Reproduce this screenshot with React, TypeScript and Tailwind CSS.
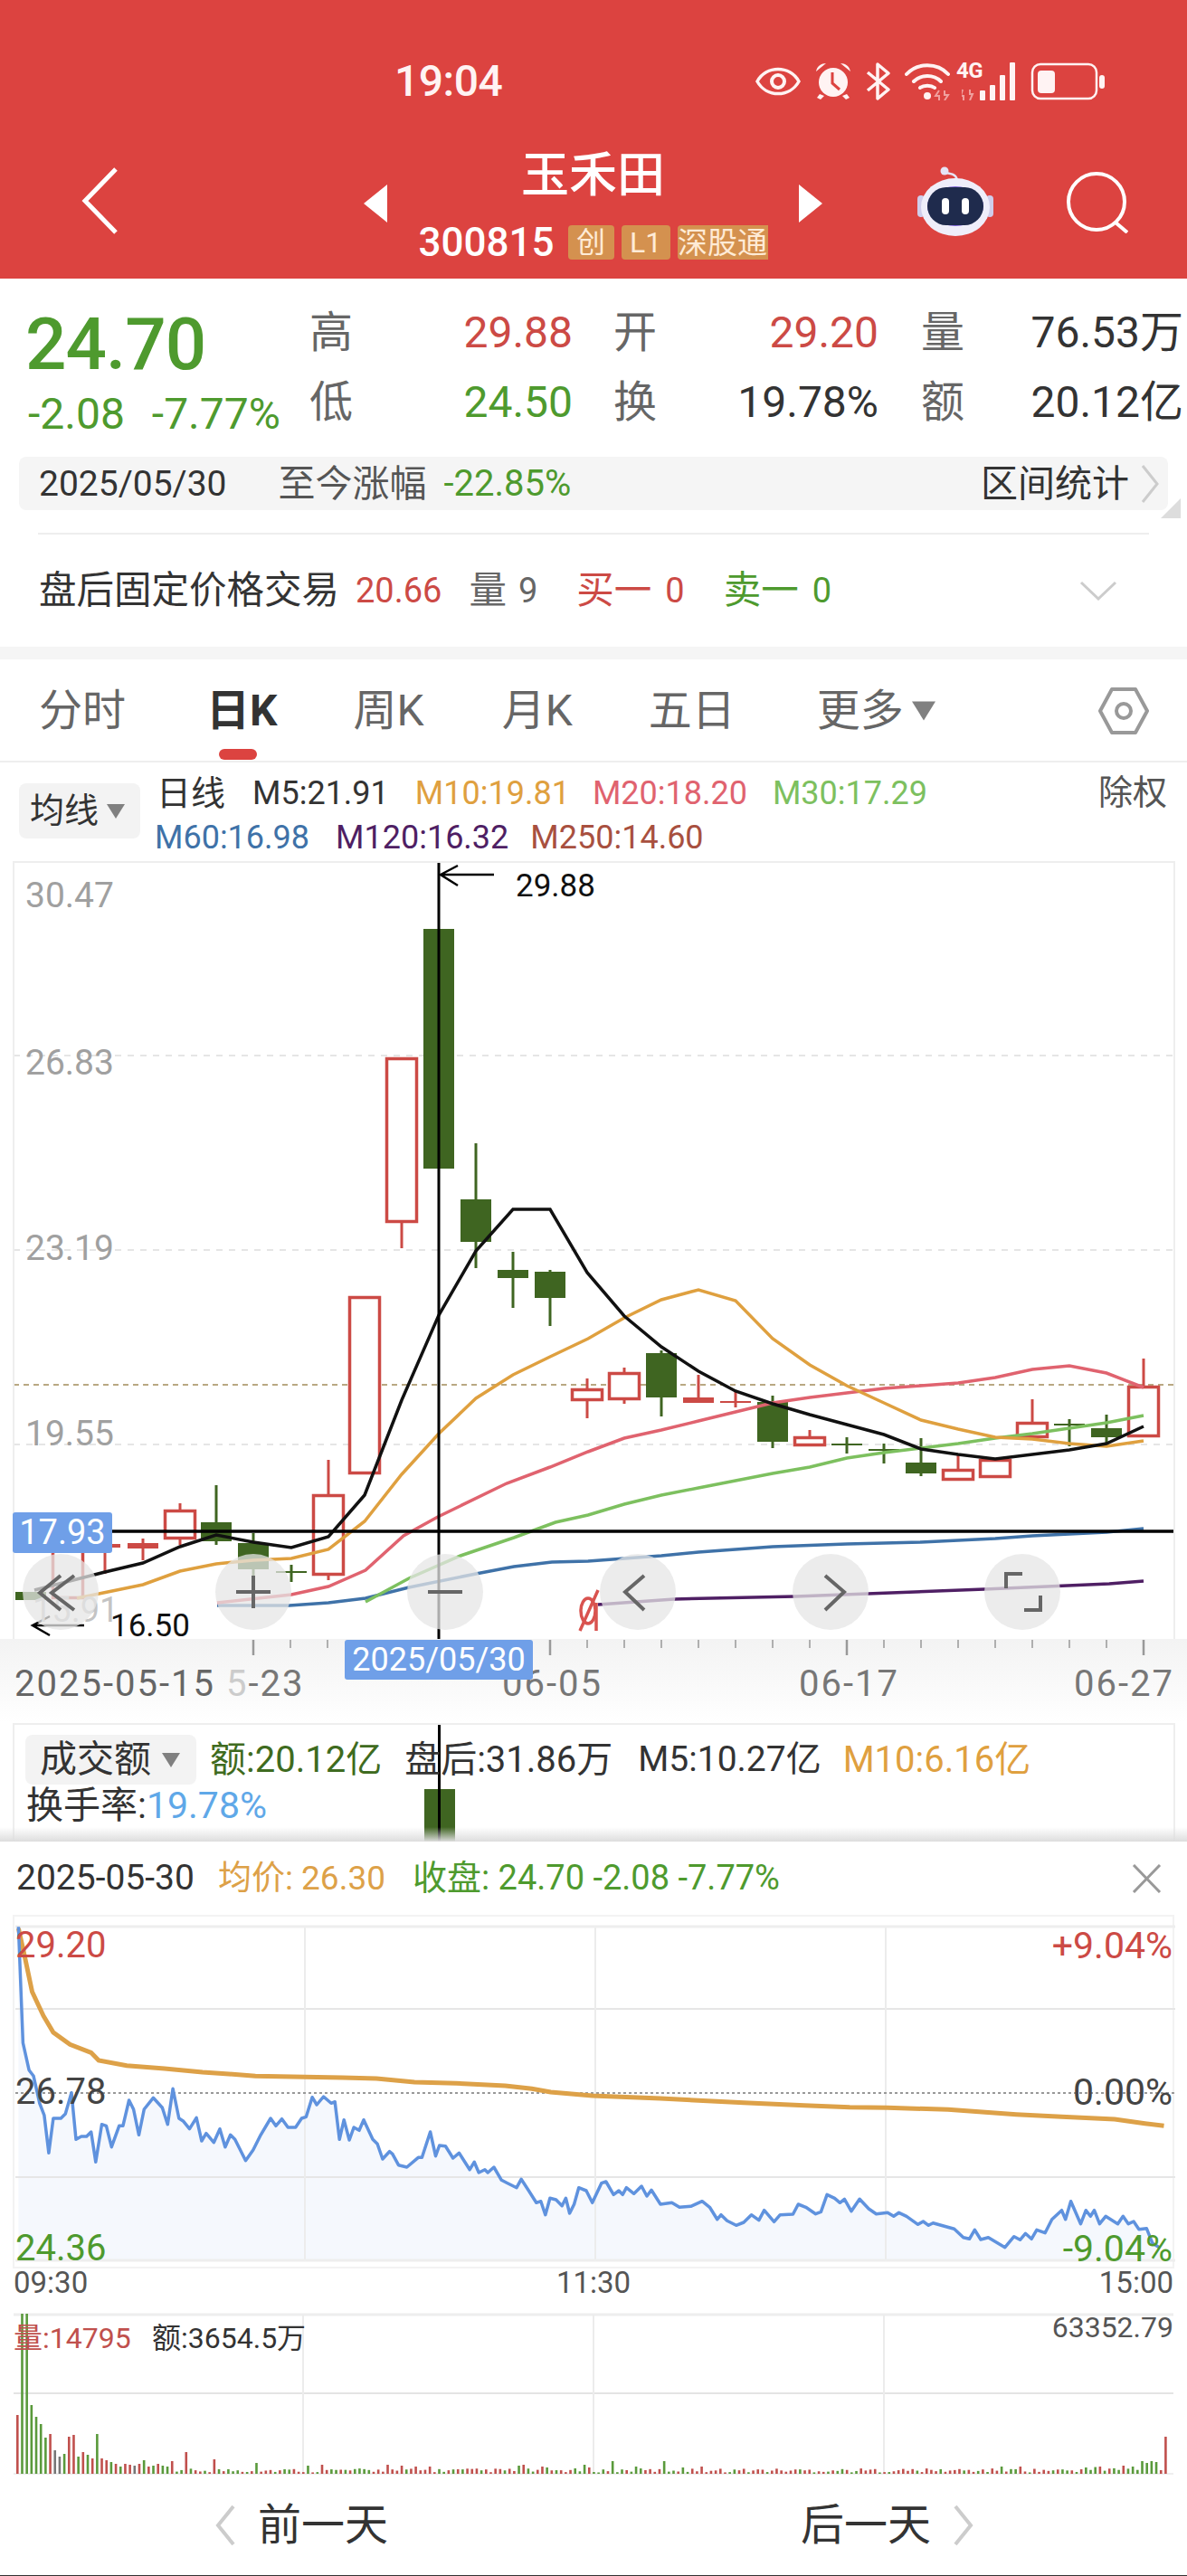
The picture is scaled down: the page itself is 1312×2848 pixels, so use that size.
import type { ReactNode } from 'react';

const RED = '#CC4A45';
const DGREEN = '#3F6521';

type Candle = { x: number; t: number; b: number; wt: number; wb: number; c: 'r' | 'g'; solid?: boolean };

const candles: Candle[] = [
  { x: 34, t: 1760, b: 1769, wt: 1760, wb: 1769, c: 'g', solid: true },
  { x: 75, t: 1702, b: 1768, wt: 1695, wb: 1768, c: 'r' },
  { x: 116, t: 1707, b: 1711, wt: 1702, wb: 1740, c: 'r', solid: true },
  { x: 158, t: 1706, b: 1712, wt: 1701, wb: 1725, c: 'r', solid: true },
  { x: 199, t: 1669, b: 1702, wt: 1662, wb: 1708, c: 'r' },
  { x: 239, t: 1683, b: 1704, wt: 1642, wb: 1708, c: 'g', solid: true },
  { x: 280, t: 1706, b: 1735, wt: 1695, wb: 1745, c: 'g', solid: true },
  { x: 322, t: 1737, b: 1739, wt: 1730, wb: 1749, c: 'g', solid: true },
  { x: 363, t: 1652, b: 1742, wt: 1614, wb: 1747, c: 'r' },
  { x: 403, t: 1433, b: 1630, wt: 1433, wb: 1630, c: 'r' },
  { x: 444, t: 1169, b: 1352, wt: 1169, wb: 1380, c: 'r' },
  { x: 485, t: 1027, b: 1292, wt: 1027, wb: 1292, c: 'g', solid: true },
  { x: 526, t: 1326, b: 1373, wt: 1264, wb: 1402, c: 'g', solid: true },
  { x: 567, t: 1404, b: 1413, wt: 1384, wb: 1446, c: 'g', solid: true },
  { x: 608, t: 1406, b: 1435, wt: 1404, wb: 1466, c: 'g', solid: true },
  { x: 649, t: 1535, b: 1549, wt: 1524, wb: 1568, c: 'r' },
  { x: 690, t: 1517, b: 1548, wt: 1512, wb: 1552, c: 'r' },
  { x: 731, t: 1496, b: 1545, wt: 1493, wb: 1566, c: 'g', solid: true },
  { x: 772, t: 1545, b: 1551, wt: 1520, wb: 1551, c: 'r', solid: true },
  { x: 813, t: 1549, b: 1551, wt: 1537, wb: 1556, c: 'r', solid: true },
  { x: 854, t: 1550, b: 1594, wt: 1543, wb: 1601, c: 'g', solid: true },
  { x: 895, t: 1588, b: 1599, wt: 1581, wb: 1599, c: 'r' },
  { x: 936, t: 1596, b: 1598, wt: 1589, wb: 1607, c: 'g', solid: true },
  { x: 977, t: 1602, b: 1604, wt: 1596, wb: 1618, c: 'g', solid: true },
  { x: 1018, t: 1617, b: 1629, wt: 1590, wb: 1632, c: 'g', solid: true },
  { x: 1059, t: 1624, b: 1637, wt: 1609, wb: 1637, c: 'r' },
  { x: 1100, t: 1613, b: 1634, wt: 1613, wb: 1634, c: 'r' },
  { x: 1141, t: 1572, b: 1590, wt: 1547, wb: 1590, c: 'r' },
  { x: 1182, t: 1574, b: 1576, wt: 1569, wb: 1599, c: 'g', solid: true },
  { x: 1223, t: 1579, b: 1589, wt: 1564, wb: 1596, c: 'g', solid: true },
  { x: 1264, t: 1532, b: 1589, wt: 1502, wb: 1589, c: 'r' },
];

const m5 = [[38, 1758], [116, 1738], [158, 1728], [199, 1710], [239, 1697], [280, 1705], [322, 1711], [363, 1699], [403, 1653], [444, 1548], [485, 1454], [526, 1383], [567, 1337], [608, 1337], [649, 1407], [690, 1455], [731, 1489], [772, 1516], [813, 1538], [854, 1552], [895, 1564], [936, 1575], [977, 1586], [1018, 1602], [1059, 1608], [1100, 1613], [1141, 1608], [1182, 1603], [1223, 1596], [1264, 1577]];
const m10 = [[85, 1767], [158, 1752], [199, 1737], [239, 1729], [280, 1725], [322, 1723], [363, 1713], [403, 1682], [444, 1630], [485, 1585], [526, 1546], [567, 1520], [608, 1500], [650, 1480], [690, 1457], [731, 1437], [772, 1426], [813, 1438], [854, 1480], [895, 1509], [936, 1532], [977, 1551], [1018, 1570], [1059, 1580], [1100, 1589], [1141, 1591], [1182, 1596], [1223, 1599], [1264, 1593]];
const m20 = [[240, 1772], [322, 1763], [363, 1754], [404, 1736], [446, 1698], [484, 1677], [560, 1640], [608, 1622], [650, 1605], [690, 1590], [731, 1581], [772, 1571], [813, 1561], [854, 1551], [895, 1545], [936, 1540], [977, 1535], [1018, 1532], [1059, 1529], [1100, 1523], [1141, 1514], [1182, 1510], [1223, 1518], [1264, 1534]];
const m30 = [[404, 1771], [452, 1745], [509, 1720], [568, 1700], [614, 1683], [650, 1675], [690, 1663], [731, 1653], [772, 1645], [813, 1637], [854, 1629], [895, 1622], [936, 1612], [977, 1606], [1018, 1601], [1059, 1596], [1100, 1590], [1141, 1585], [1182, 1579], [1223, 1573], [1264, 1565]];
const m60 = [[240, 1775], [320, 1775], [363, 1772], [404, 1767], [452, 1755], [526, 1740], [568, 1732], [610, 1727], [650, 1726], [731, 1720], [772, 1716], [813, 1713], [854, 1710], [936, 1707], [1018, 1705], [1100, 1701], [1141, 1698], [1182, 1696], [1223, 1694], [1264, 1690]];
const m120 = [[661, 1774], [745, 1768], [879, 1765], [1088, 1757], [1226, 1751], [1264, 1748]];

// traced from the zoomed crop: x / 1.195, y / 3 + 2030
const blueRaw = [[22, 295], [28, 680], [36, 770], [42, 790], [50, 880], [56, 920], [62, 1045], [68, 930], [78, 930], [84, 915], [92, 845], [98, 1000], [105, 990], [112, 990], [118, 975], [124, 1075], [132, 950], [138, 955], [145, 1025], [155, 955], [160, 955], [168, 870], [174, 900], [181, 985], [188, 900], [200, 862], [212, 895], [219, 950], [226, 832], [234, 930], [240, 940], [248, 965], [257, 928], [264, 1005], [270, 980], [280, 1010], [288, 965], [295, 1025], [302, 985], [308, 1000], [322, 1070], [332, 1035], [342, 985], [355, 930], [362, 955], [370, 932], [378, 960], [388, 960], [396, 930], [402, 925], [410, 860], [416, 885], [425, 858], [435, 880], [440, 875], [446, 1000], [452, 935], [459, 1002], [465, 960], [472, 970], [478, 935], [490, 1000], [496, 1015], [503, 1065], [512, 1040], [516, 1048], [524, 1085], [535, 1092], [550, 1060], [555, 1060], [566, 975], [573, 1055], [578, 1020], [586, 1022], [596, 1062], [604, 1045], [618, 1100], [624, 1075], [630, 1110], [638, 1100], [642, 1110], [650, 1092], [660, 1135], [668, 1145], [680, 1160], [686, 1132], [696, 1170], [706, 1210], [712, 1205], [718, 1250], [724, 1195], [732, 1200], [740, 1220], [745, 1195], [750, 1245], [756, 1215], [762, 1160], [772, 1170], [780, 1210], [792, 1145], [798, 1140], [808, 1183], [815, 1170], [820, 1183], [825, 1160], [835, 1180], [845, 1155], [852, 1188], [858, 1168], [870, 1215], [885, 1210], [895, 1225], [910, 1222], [925, 1205], [935, 1225], [945, 1265], [950, 1250], [958, 1270], [970, 1285], [980, 1275], [990, 1250], [1000, 1268], [1007, 1235], [1020, 1273], [1028, 1250], [1045, 1248], [1052, 1215], [1062, 1225], [1075, 1247], [1082, 1240], [1090, 1183], [1100, 1195], [1107, 1210], [1113, 1198], [1122, 1238], [1133, 1198], [1145, 1230], [1155, 1247], [1170, 1243], [1178, 1255], [1185, 1243], [1195, 1255], [1210, 1282], [1217, 1272], [1224, 1285], [1230, 1277], [1245, 1288], [1258, 1297], [1270, 1325], [1278, 1330], [1285, 1300], [1293, 1332], [1303, 1325], [1325, 1358], [1337, 1322], [1345, 1333], [1352, 1312], [1360, 1330], [1367, 1300], [1378, 1310], [1387, 1265], [1400, 1235], [1405, 1265], [1412, 1205], [1425, 1280], [1432, 1235], [1438, 1255], [1443, 1235], [1450, 1280], [1458, 1255], [1474, 1280], [1481, 1255], [1488, 1280], [1495, 1272], [1502, 1298], [1512, 1295], [1520, 1345], [1530, 1360]];
const orangeRaw = [[22, 300], [30, 390], [40, 510], [55, 590], [68, 645], [90, 685], [118, 712], [128, 738], [165, 755], [215, 765], [265, 777], [300, 783], [335, 790], [400, 793], [450, 795], [495, 798], [545, 810], [600, 814], [665, 822], [700, 832], [725, 843], [780, 855], [870, 864], [980, 878], [1060, 887], [1120, 893], [1170, 895], [1250, 901], [1340, 917], [1400, 925], [1470, 933], [1510, 947], [1535, 955]];

const fromCrop = (a: number[][]) => a.map(([u, v]) => [u / 1.195, 2030 + v / 3]);
const toPts = (a: number[][]) => a.map((p) => p.map((n) => n.toFixed(1)).join(',')).join(' ');

const blue = fromCrop(blueRaw);
const orange = fromCrop(orangeRaw);

// volume bars, first ones read off the crop, the rest noise with known bumps
const firstBars: [number, string][] = [[65, 'r'], [177, 'g'], [177, 'g'], [76, 'g'], [63, 'g'], [55, 'g'], [40, 'g'], [44, 'r'], [26, 'x'], [19, 'x'], [22, 'g'], [41, 'r'], [43, 'r'], [19, 'g'], [24, 'r'], [21, 'g'], [17, 'r'], [44, 'g'], [17, 'r'], [15, 'r'], [13, 'g'], [11, 'r'], [8, 'g'], [11, 'r'], [10, 'r'], [9, 'x'], [11, 'r'], [15, 'g'], [8, 'r'], [9, 'g'], [11, 'r'], [9, 'g'], [8, 'g'], [14, 'r']];
const bumps: Record<number, number> = { 36: 24, 42: 16, 51: 12, 62: 9, 65: 10, 79: 10, 82: 9, 85: 8, 88: 8, 107: 9, 108: 10, 112: 8, 113: 7, 121: 10, 122: 7, 127: 14, 132: 8, 138: 14, 142: 7, 146: 8, 210: 8, 214: 8, 228: 7, 231: 8, 236: 9, 238: 8, 240: 14, 241: 12, 242: 14, 243: 13, 244: 4, 245: 41 };
const bars = Array.from({ length: 246 }, (_, i) => {
  const x = 18 + i * 5.18;
  if (i < firstBars.length) return { x, h: firstBars[i][0], c: firstBars[i][1] };
  const noise = Math.abs(Math.sin(i * 12.9898) * 43758.5453) % 1;
  const h = bumps[i] ?? 1.5 + noise * (i > 225 ? 7 : 4.5);
  return { x, h, c: (i * 7 + Math.floor(noise * 10)) % 2 ? 'r' : 'g' };
});
const barColor: Record<string, string> = { r: '#C0504D', g: '#5A9A3C', x: '#777777' };

function CircleBtn({ children, className }: { children: ReactNode; className: string }) {
  return (
    <div className={`absolute top-[766px] size-[84px] rounded-full bg-[#e6e6e6]/75 ${className}`}>
      <svg viewBox="0 0 84 84" className="size-[84px]" fill="none" stroke="#666666" strokeWidth="4">
        {children}
      </svg>
    </div>
  );
}

function KChart() {
  return (
    <svg viewBox="15 952 1282 860" className="absolute inset-0 w-[1282px] h-[860px]" fill="none">
      {[1167, 1382, 1597].map((y) => (
        <line key={y} x1="15" x2="1297" y1={y} y2={y} stroke="#dddddd" strokeWidth="1.5" strokeDasharray="7 7" />
      ))}
      <line x1="15" x2="1297" y1="1531" y2="1531" stroke="#B9A882" strokeWidth="2" strokeDasharray="6 5" />
      {candles.map((k) => {
        const col = k.c === 'r' ? RED : DGREEN;
        return (
          <g key={k.x}>
            {k.wt < k.t && <line x1={k.x} x2={k.x} y1={k.wt} y2={k.t} stroke={col} strokeWidth="3" />}
            {k.wb > k.b && <line x1={k.x} x2={k.x} y1={k.b} y2={k.wb} stroke={col} strokeWidth="3" />}
            {k.solid ? (
              <rect x={k.x - 17} y={k.t} width="34" height={k.b - k.t} fill={col} />
            ) : (
              <rect x={k.x - 16.5} y={k.t + 1.5} width="33" height={k.b - k.t - 3} fill="#ffffff" stroke={col} strokeWidth="3.5" />
            )}
          </g>
        );
      })}
      <polyline points={toPts(m120)} stroke="#4F1F64" strokeWidth="3.5" />
      <polyline points={toPts(m60)} stroke="#3F72A8" strokeWidth="3.5" />
      <polyline points={toPts(m30)} stroke="#7DC05F" strokeWidth="3.5" />
      <polyline points={toPts(m20)} stroke="#E0636F" strokeWidth="3.5" />
      <polyline points={toPts(m10)} stroke="#DFA03F" strokeWidth="3.5" />
      <polyline points={toPts(m5)} stroke="#111111" strokeWidth="3.5" />
      <ellipse cx="650" cy="1781" rx="8" ry="14" stroke="#D9534F" strokeWidth="3.5" />
      <path d="M661 1758 L641 1803 M659 1772 L659 1803" stroke="#D9534F" strokeWidth="3.5" />
      <line x1="485" x2="485" y1="952" y2="1812" stroke="#000000" strokeWidth="3" />
      <line x1="124" x2="1297" y1="1693" y2="1693" stroke="#000000" strokeWidth="3.5" />
      <path d="M546 967 H487 M506 957 L487 967 L506 979" stroke="#000000" strokeWidth="2.5" />
      <path d="M93 1797 H36 M55 1787 L36 1797 L55 1808" stroke="#000000" strokeWidth="2.5" />
    </svg>
  );
}

function AxisTicks() {
  const xs = Array.from({ length: 25 }, (_, i) => 280 + i * 41);
  const major = [280, 608, 936, 1264];
  return (
    <svg viewBox="0 1812 1312 20" className="absolute left-0 top-0 w-[1312px] h-[20px]">
      {xs.map((x) => (
        <line key={x} x1={x} x2={x} y1="1813" y2={major.includes(x) ? 1830 : 1822} stroke="#999999" strokeWidth={major.includes(x) ? 2.5 : 1.5} />
      ))}
    </svg>
  );
}

function IntradayChart() {
  const area = `${toPts(blue)} ${blue[blue.length - 1][0]},2497 ${blue[0][0]},2497`;
  return (
    <svg viewBox="14 2117 1284 391" className="absolute inset-0 w-[1284px] h-[391px]" fill="none">
      <polygon points={area} fill="#F5F8FD" />
      {[2219, 2405].map((y) => (
        <line key={y} x1="15" x2="1297" y1={y} y2={y} stroke="#e6e6e6" strokeWidth="2" />
      ))}
      {[335, 656, 977].map((x) => (
        <line key={x} x1={x} x2={x} y1="2128" y2="2497" stroke="#ececec" strokeWidth="2" />
      ))}
      <line x1="15" x2="1297" y1="2128" y2="2128" stroke="#eeeeee" strokeWidth="3" />
      <line x1="15" x2="1297" y1="2497" y2="2497" stroke="#eeeeee" strokeWidth="3" />
      <line x1="15" x2="1297" y1="2312" y2="2312" stroke="#999999" strokeWidth="2" strokeDasharray="3 3" />
      <polyline points={toPts(orange)} stroke="#DDA148" strokeWidth="5" />
      <polyline points={toPts(blue)} stroke="#5F92DE" strokeWidth="3.5" strokeLinejoin="round" />
    </svg>
  );
}

function VolumeChart() {
  return (
    <svg viewBox="14 2555 1284 180" className="absolute inset-0 w-[1284px] h-[180px]" fill="none">
      <line x1="15" x2="1297" y1="2557" y2="2557" stroke="#eeeeee" strokeWidth="3" />
      <line x1="15" x2="1297" y1="2644" y2="2644" stroke="#e4e4e4" strokeWidth="2" />
      <line x1="15" x2="1297" y1="2733" y2="2733" stroke="#eeeeee" strokeWidth="2" />
      {[335, 656, 977].map((x) => (
        <line key={x} x1={x} x2={x} y1="2557" y2="2733" stroke="#ececec" strokeWidth="2" />
      ))}
      {bars.map((b) => (
        <rect key={b.x} x={b.x} y={2733 - b.h} width="2.6" height={b.h} fill={barColor[b.c]} />
      ))}
    </svg>
  );
}

function StatusIcons() {
  return (
    <div className="flex items-center text-white">
      <svg viewBox="0 0 50 34" className="w-[50px] h-[34px]" fill="none" stroke="#FFF3F3" strokeWidth="3.5">
        <path d="M2 17 C12 -1 38 -1 48 17 C38 35 12 35 2 17 Z" />
        <circle cx="25" cy="17" r="7" strokeWidth="4" />
      </svg>
      <svg viewBox="0 0 42 42" className="ml-[15px] w-[42px] h-[42px]" fill="#FFF3F3">
        <circle cx="21" cy="22" r="16" />
        <path d="M2 10 C3 4 8 1 13 1 Z M40 10 C39 4 34 1 29 1 Z M6 35 L11 37 L7 41 L3 39 Z M36 35 L31 37 L35 41 L39 39 Z" />
        <path d="M20 11 V23 L28 30" fill="none" stroke="#DC4340" strokeWidth="3" />
      </svg>
      <svg viewBox="0 0 28 42" className="ml-[15px] w-[28px] h-[42px]" fill="none" stroke="#FFF3F3" strokeWidth="3.5" strokeLinejoin="round">
        <path d="M2 11 L25 30 L13 40 V2 L25 12 L2 31" />
      </svg>
      <div className="relative ml-[15px] w-[52px] h-[42px]">
        <svg viewBox="0 0 52 42" className="w-[52px] h-[42px]" fill="none" stroke="#FFF3F3" strokeWidth="4" strokeLinecap="round">
          <path d="M2 13 C14 0 36 0 48 13" />
          <path d="M10 21 C18 13 32 13 40 21" />
          <path d="M17 28 C21 25 29 25 33 28" />
          <circle cx="25" cy="37" r="4" fill="#FFF3F3" stroke="none" />
          <path d="M38 31 L34 37 H38 V42 M44 42 L48 36 H44 V31" stroke="#F0A09E" strokeWidth="2" strokeLinecap="butt" />
        </svg>
      </div>
      <div className="relative ml-[11px] w-[68px] h-[42px]">
        <span className="absolute -left-[6px] -top-[4px] text-[24px] leading-[26px] font-bold text-[#FFF3F3] tracking-[-0.5px]">4G</span>
        <svg viewBox="0 0 68 42" className="w-[68px] h-[42px]" fill="#FFF3F3">
          <path d="M1 30 L-1 37 H2 V42 M9 42 L12 35 H9 V30" fill="none" stroke="#F0A09E" strokeWidth="2" />
          <rect x="20" y="31" width="6" height="11" rx="1" />
          <rect x="31" y="25" width="6" height="17" rx="1" />
          <rect x="42" y="14" width="6" height="28" rx="1" />
          <rect x="53" y="0" width="6" height="42" rx="1" />
        </svg>
      </div>
      <svg viewBox="0 0 84 42" className="ml-[8px] w-[84px] h-[42px]" fill="#FFF3F3">
        <rect x="2" y="2" width="71" height="38" rx="9" fill="none" stroke="#FFF3F3" strokeWidth="2.5" />
        <rect x="8" y="9" width="19" height="25" rx="4" />
        <rect x="76" y="14" width="6" height="15" rx="3" />
      </svg>
    </div>
  );
}

function Robot() {
  return (
    <svg viewBox="0 0 84 78" className="w-[84px] h-[78px]">
      <path d="M44 18 C44 10 38 9 31 8" fill="none" stroke="#E6E4F6" strokeWidth="2.5" />
      <circle cx="30" cy="6" r="4.5" fill="#E6E4F6" />
      <rect x="0" y="33" width="8" height="24" rx="4" fill="#CFCDEB" />
      <rect x="76" y="33" width="8" height="24" rx="4" fill="#CFCDEB" />
      <ellipse cx="42" cy="46" rx="38" ry="32" fill="#EFEEFA" />
      <ellipse cx="42" cy="45" rx="31" ry="22" fill="#7F62D8" />
      <rect x="11" y="24" width="62" height="42" rx="21" fill="#1F2B4D" />
      <rect x="27" y="36" width="8" height="18" rx="4" fill="#FFFFFF" />
      <rect x="49" y="36" width="8" height="18" rx="4" fill="#FFFFFF" />
    </svg>
  );
}

function TabIcon() {
  return (
    <svg viewBox="0 0 56 52" className="w-[56px] h-[52px]" fill="none" stroke="#999999" strokeWidth="4" strokeLinejoin="round">
      <path d="M15 2 H41 L54 26 L41 50 H15 L2 26 Z" />
      <circle cx="28" cy="26" r="8" />
    </svg>
  );
}

function Caret({ className }: { className: string }) {
  return (
    <svg viewBox="0 0 20 16" className={className} fill="#808080">
      <path d="M0 0 H20 L10 16 Z" />
    </svg>
  );
}

export default function App() {
  return (
    <div className="relative w-[1312px] h-[2848px] overflow-hidden bg-white font-[Roboto,'Noto_Sans_CJK_SC',sans-serif] text-[#333333]">
      <header className="h-[308px] pt-[66px] bg-[#DC4340] text-white">
        <div className="flex items-center justify-between h-[48px] pl-[436px] pr-[89px]">
          <span className="text-[48px] leading-[48px] font-medium text-[#FFF3F3] tracking-[-0.5px]">19:04</span>
          <StatusIcons />
        </div>
        <div className="flex items-start pl-[90px] pt-[54px]">
          <svg viewBox="0 0 41 74" className="mt-[17px] w-[41px] h-[74px]" fill="none" stroke="#ffffff" strokeWidth="5">
            <path d="M38 2 L4 37 L38 72" />
          </svg>
          <svg viewBox="0 0 26 42" className="mt-[36px] ml-[271px] w-[26px] h-[42px]" fill="#ffffff">
            <path d="M26 0 V42 L0 21 Z" />
          </svg>
          <div className="flex flex-col items-center w-[455px] -mt-[5px]">
            <div className="text-[53px] leading-[62px] font-medium">玉禾田</div>
            <div className="flex items-center mt-[23px] h-[40px]">
              <span className="text-[44px] leading-[40px] font-medium mr-[15px]">300815</span>
              <span className="flex items-center justify-center w-[51px] h-[38px] rounded-[4px] bg-[#D4914F] text-[#FFEBD6] text-[32px] leading-none">创</span>
              <span className="flex items-center justify-center ml-[8px] w-[54px] h-[38px] rounded-[4px] bg-[#D4914F] text-[#FFEBD6] text-[32px] leading-none">L1</span>
              <span className="flex items-center justify-center ml-[8px] w-[100px] h-[38px] rounded-l-[4px] bg-[#D4914F] text-[#FFEBD6] text-[33px] leading-none whitespace-nowrap">深股通</span>
            </div>
          </div>
          <svg viewBox="0 0 26 42" className="mt-[36px] w-[26px] h-[42px]" fill="#ffffff">
            <path d="M0 0 V42 L26 21 Z" />
          </svg>
          <div className="mt-[15px] ml-[105px]">
            <Robot />
          </div>
          <svg viewBox="0 0 68 68" className="mt-[22px] ml-[81px] w-[68px] h-[68px]" fill="none" stroke="#ffffff" strokeWidth="4">
            <circle cx="33" cy="33" r="31" />
            <path d="M54 56 L67 67" />
          </svg>
        </div>
      </header>

      <section className="flex flex-col h-[407px]">
        <div className="flex items-start">
          <div className="w-[342px] pl-[28px] pt-[31px] shrink-0">
            <div className="text-[#4E9A2E] text-[80px] leading-[84px] font-medium tracking-[-1px]">24.70</div>
            <div className="flex mt-[11px] pl-[3px] text-[#4E9A2E] text-[48px] leading-[48px] whitespace-nowrap">
              <span>-2.08</span>
              <span className="ml-[30px]">-7.77%</span>
            </div>
          </div>
          <div className="grid grid-cols-[48px_243px_48px_290px_48px_289px] grid-rows-[77px_77px] items-center pt-[21px] whitespace-nowrap text-[48px] leading-[60px] w-[966px]">
            <span className="text-[#666666]">高</span>
            <span className="text-right text-[#CC4A45]">29.88</span>
            <span className="ml-[45px] text-[#666666]">开</span>
            <span className="text-right text-[#CC4A45]">29.20</span>
            <span className="ml-[47px] text-[#666666]">量</span>
            <span className="text-right text-[#333333]">76.53万</span>
            <span className="text-[#666666]">低</span>
            <span className="text-right text-[#4E9A2E]">24.50</span>
            <span className="ml-[45px] text-[#666666]">换</span>
            <span className="text-right text-[#333333]">19.78%</span>
            <span className="ml-[47px] text-[#666666]">额</span>
            <span className="text-right text-[#333333]">20.12亿</span>
          </div>
        </div>
        <div className="relative flex items-center mt-[22px] ml-[21px] w-[1270px] h-[59px] rounded-[8px] bg-[#f5f5f5] text-[39px] leading-[48px]">
          <span className="ml-[22px]">2025/05/30</span>
          <span className="ml-[57px] text-[#555555] text-[41px]">至今涨幅</span>
          <span className="ml-[19px] text-[#4E9A2E] text-[40px]">-22.85%</span>
          <span className="ml-auto text-[41px]">区间统计</span>
          <svg viewBox="0 0 22 44" className="ml-[12px] mr-[9px] w-[22px] h-[44px]" fill="none" stroke="#cccccc" strokeWidth="3">
            <path d="M3 2 L19 22 L3 42" />
          </svg>
          <svg viewBox="0 0 22 22" className="absolute -right-[14px] -bottom-[9px] w-[22px] h-[22px]" fill="#dddddd">
            <path d="M22 0 V22 H0 Z" />
          </svg>
        </div>
        <div className="mt-[25px] mx-[42px] h-[2px] bg-[#eeeeee]" />
        <div className="flex flex-1 items-center pl-[43px] pr-[77px] text-[41.5px] whitespace-nowrap">
          <span>盘后固定价格交易</span>
          <span className="ml-[18px] text-[#CC4A45] text-[38px]">20.66</span>
          <span className="ml-[30px] text-[#666666]">量</span>
          <span className="ml-[13px] text-[#666666] text-[38px]">9</span>
          <span className="ml-[43px] text-[#CC4A45]">买一</span>
          <span className="ml-[15px] text-[#CC4A45] text-[38px]">0</span>
          <span className="ml-[43px] text-[#4E9A2E]">卖一</span>
          <span className="ml-[15px] text-[#4E9A2E] text-[38px]">0</span>
          <svg viewBox="0 0 42 22" className="ml-auto w-[42px] h-[22px]" fill="none" stroke="#cccccc" strokeWidth="3">
            <path d="M2 2 L21 20 L40 2" />
          </svg>
        </div>
      </section>

      <div className="h-[14px] bg-[#f5f5f5]" />

      <nav className="relative flex items-center h-[114px] pt-[2px] pl-[43px] pr-[42px] border-b-2 border-[#eeeeee] text-[48px] text-[#666666] whitespace-nowrap">
        <span>分时</span>
        <span className="relative ml-[89px] font-bold text-[#333333]">
          日K
          <span className="absolute left-[14px] -bottom-[18px] w-[42px] h-[12px] rounded-full bg-[#DC4340]" />
        </span>
        <span className="ml-[84px]">周K</span>
        <span className="ml-[86px]">月K</span>
        <span className="ml-[84px]">五日</span>
        <span className="ml-[90px]">更多</span>
        <Caret className="ml-[9px] w-[26px] h-[22px]" />
        <div className="ml-auto">
          <TabIcon />
        </div>
      </nav>

      <div className="flex justify-between h-[109px] pl-[21px] pr-[22px] whitespace-nowrap">
        <div className="flex">
          <div className="flex items-center mt-[23px] w-[134px] h-[61px] pl-[12px] rounded-[8px] bg-[#f3f3f3] text-[38px]">
            <span>均线</span>
            <Caret className="ml-[9px] w-[20px] h-[16px]" />
          </div>
          <div className="ml-[18px] pt-[10px] text-[36px] leading-[49px]">
            <div className="flex">
              <span className="text-[38px]">日线</span>
              <span className="ml-[30px]">M5:21.91</span>
              <span className="ml-[29px] text-[#DFA03F]">M10:19.81</span>
              <span className="ml-[25px] text-[#E0636F]">M20:18.20</span>
              <span className="ml-[28px] text-[#7DC05F]">M30:17.29</span>
            </div>
            <div className="flex -ml-[2px]">
              <span className="text-[#3F72A8]">M60:16.98</span>
              <span className="ml-[29px] text-[#4F1F64]">M120:16.32</span>
              <span className="ml-[24px] text-[#A8503F]">M250:14.60</span>
            </div>
          </div>
        </div>
        <span className="pt-[9px] text-[38px] leading-[49px] text-[#555555]">除权</span>
      </div>

      <div className="relative h-[860px]">
        <div className="relative ml-[15px] w-[1282px] h-[860px]">
          <KChart />
        </div>
        <div className="absolute left-[14px] top-0 w-[2px] h-[860px] bg-[#eeeeee]" />
        <div className="absolute left-[1297px] top-0 w-[2px] h-[860px] bg-[#eeeeee]" />
        <div className="absolute left-[14px] top-0 w-[1285px] h-[2px] bg-[#eeeeee]" />
        <span className="absolute left-[28px] top-[16px] text-[39px] leading-[44px] text-[#a0a0a0]">30.47</span>
        <span className="absolute left-[28px] top-[201px] text-[39px] leading-[44px] text-[#a0a0a0]">26.83</span>
        <span className="absolute left-[28px] top-[406px] text-[39px] leading-[44px] text-[#a0a0a0]">23.19</span>
        <span className="absolute left-[28px] top-[611px] text-[39px] leading-[44px] text-[#a0a0a0]">19.55</span>
        <span className="absolute left-[36px] top-[806px] text-[38px] leading-[44px] text-[#c4c4c4]">15.91</span>
        <span className="absolute left-[570px] top-[8px] text-[35px] leading-[40px] text-[#111111]">29.88</span>
        <span className="absolute left-[122px] top-[826px] text-[35px] leading-[40px] text-[#111111]">16.50</span>
        <div className="absolute left-[14px] top-[720px] flex items-center justify-center w-[110px] h-[45px] rounded-[3px] bg-[#6F9FE8] text-white text-[38px]">
          17.93
        </div>
        <CircleBtn className="left-[25px]">
          <path d="M42 24 L19 43 L42 62 M57 24 L32 43 L57 62" />
        </CircleBtn>
        <CircleBtn className="left-[238px]">
          <path d="M23 42 H61 M42 24 V60" />
        </CircleBtn>
        <CircleBtn className="left-[450px]">
          <path d="M23 42 H61" />
        </CircleBtn>
        <CircleBtn className="left-[663px]">
          <path d="M49 24 L28 42 L49 62" />
        </CircleBtn>
        <CircleBtn className="left-[876px]">
          <path d="M36 24 L57 42 L36 62" />
        </CircleBtn>
        <CircleBtn className="left-[1088px]">
          <path d="M24 38 V22 H42 M62 46 V62 H44" />
        </CircleBtn>
      </div>

      <div className="relative h-[93px] bg-gradient-to-b from-[#f3f3f3] to-white text-[40px] leading-[44px] tracking-[2px] text-[#777777] whitespace-nowrap">
        <AxisTicks />
        <span className="absolute left-[16px] top-[28px] text-[#666666]">2025-05-15</span>
        <span className="absolute left-[250px] top-[28px]">
          <span className="text-[#cccccc]">5</span>-23
        </span>
        <span className="absolute left-[555px] top-[28px]">06-05</span>
        <span className="absolute left-[883px] top-[28px]">06-17</span>
        <span className="absolute left-[1187px] top-[28px]">06-27</span>
        <div className="absolute left-[381px] top-[1px] flex items-center justify-center w-[208px] h-[44px] rounded-[3px] bg-[#6F9FE8] text-white text-[36px] tracking-normal">
          2025/05/30
        </div>
      </div>

      <div className="relative ml-[14px] w-[1285px] h-[131px] overflow-hidden border-x-2 border-t-2 border-[#eeeeee] whitespace-nowrap">
        <div className="absolute left-[453px] top-[71px] w-[34px] h-[60px] bg-[#3F6521]" />
        <div className="absolute left-[468px] top-0 w-[3px] h-[131px] bg-black" />
        <div className="relative flex items-center h-[55px] mt-[11px] text-[40px]">
          <div className="flex items-center ml-[12px] w-[189px] h-[55px] pl-[16px] rounded-[8px] bg-[#f3f3f3] text-[41px]">
            <span>成交额</span>
            <Caret className="ml-[11px] w-[22px] h-[16px]" />
          </div>
          <span className="ml-[15px] text-[#3F6B20]">额:20.12亿</span>
          <span className="ml-[25px]">盘后:31.86万</span>
          <span className="ml-[28px] text-[39px]">M5:10.27亿</span>
          <span className="ml-[24px] text-[#DFA03F]">M10:6.16亿</span>
        </div>
        <div className="relative ml-[13px] text-[41px] leading-[46px]">
          换手率:<span className="text-[#5FA8E8]">19.78%</span>
        </div>
      </div>

      <section className="relative h-[812px] bg-white whitespace-nowrap">
        <div className="absolute left-0 -top-[16px] w-full h-[16px] bg-gradient-to-b from-transparent to-[#dddddd]" />
        <div className="flex items-center h-[81px] pl-[18px] pr-[28px]">
          <span className="text-[39px]">2025-05-30</span>
          <span className="ml-[26px] text-[37px] text-[#DDA148]">均价: 26.30</span>
          <span className="ml-[30px] text-[38px] text-[#4E9A2E]">收盘: 24.70 -2.08 -7.77%</span>
          <svg viewBox="0 0 33 32" className="ml-auto w-[33px] h-[32px]" fill="none" stroke="#999999" strokeWidth="3">
            <path d="M2 1 L31 31 M31 1 L2 31" />
          </svg>
        </div>
        <div className="relative ml-[14px] w-[1284px] h-[391px] border-y-2 border-x-2 border-[#f3f3f3]">
          <IntradayChart />
          <span className="absolute left-[1px] top-[10px] text-[40px] leading-[44px] text-[#CC4A45]">29.20</span>
          <span className="absolute left-[1px] top-[172px] text-[40px] leading-[44px] text-[#444444]">26.78</span>
          <span className="absolute left-[1px] top-[345px] text-[40px] leading-[44px] text-[#4E9A2E]">24.36</span>
          <span className="absolute right-[0px] top-[10px] text-[41px] leading-[44px] text-[#CC4A45]">+9.04%</span>
          <span className="absolute right-[0px] top-[172px] text-[41px] leading-[44px] text-[#444444]">0.00%</span>
          <span className="absolute right-[0px] top-[345px] text-[41px] leading-[44px] text-[#4E9A2E]">-9.04%</span>
        </div>
        <div className="flex justify-between ml-[15px] w-[1282px] h-[49px] -mt-[4px] mb-[4px] text-[33px] leading-[40px] text-[#555555]">
          <span>09:30</span>
          <span>11:30</span>
          <span>15:00</span>
        </div>
        <div className="relative ml-[14px] w-[1284px] h-[180px] text-[32px] leading-[36px]">
          <VolumeChart />
          <span className="absolute left-[1px] top-[10px] text-[#C0504D]">量:14795</span>
          <span className="absolute left-[154px] top-[10px]">额:3654.5万</span>
          <span className="absolute right-[1px] -top-[2px] text-[#555555]">63352.79</span>
        </div>
        <div className="flex items-center h-[44px] mt-[33px] text-[48px] leading-[44px] text-[#333333]">
          <svg viewBox="0 0 24 46" className="ml-[237px] w-[24px] h-[46px]" fill="none" stroke="#cccccc" strokeWidth="4">
            <path d="M21 2 L4 23 L21 44" />
          </svg>
          <span className="ml-[24px]">前一天</span>
          <span className="ml-[456px]">后一天</span>
          <svg viewBox="0 0 24 46" className="ml-[24px] w-[24px] h-[46px]" fill="none" stroke="#cccccc" strokeWidth="4">
            <path d="M3 2 L20 23 L3 44" />
          </svg>
        </div>
        <div className="absolute left-0 bottom-0 w-full h-[1px] bg-[#333333]" />
      </section>
    </div>
  );
}
